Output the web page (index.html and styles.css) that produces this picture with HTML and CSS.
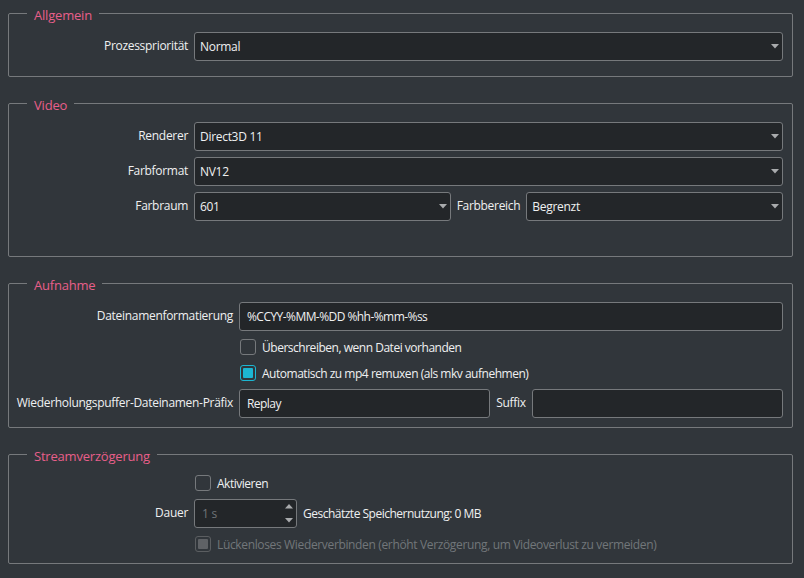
FILE: index.html
```html
<!DOCTYPE html>
<html lang="de">
<head>
<meta charset="utf-8">
<title>Erweitert</title>
<link rel="stylesheet" href="styles.css">
</head>
<body>
<div class="page">

  <fieldset class="group g-allgemein">
    <legend>Allgemein</legend>
    <div class="form">
      <label class="lbl">Prozesspriorität</label>
      <div class="combo"><span>Normal</span><svg class="arrow" width="8" height="5" viewBox="0 0 8 5"><polygon points="0,0 8,0 4,4.5"/></svg></div>
    </div>
  </fieldset>

  <fieldset class="group g-video">
    <legend>Video</legend>
    <div class="form">
      <label class="lbl">Renderer</label>
      <div class="combo"><span>Direct3D 11</span><svg class="arrow" width="8" height="5" viewBox="0 0 8 5"><polygon points="0,0 8,0 4,4.5"/></svg></div>
      <label class="lbl">Farbformat</label>
      <div class="combo"><span>NV12</span><svg class="arrow" width="8" height="5" viewBox="0 0 8 5"><polygon points="0,0 8,0 4,4.5"/></svg></div>
      <label class="lbl">Farbraum</label>
      <div class="pair">
        <div class="combo"><span>601</span><svg class="arrow" width="8" height="5" viewBox="0 0 8 5"><polygon points="0,0 8,0 4,4.5"/></svg></div>
        <label class="lbl">Farbbereich</label>
        <div class="combo"><span>Begrenzt</span><svg class="arrow" width="8" height="5" viewBox="0 0 8 5"><polygon points="0,0 8,0 4,4.5"/></svg></div>
      </div>
    </div>
  </fieldset>

  <fieldset class="group g-aufnahme">
    <legend>Aufnahme</legend>
    <div class="form wide">
      <label class="lbl">Dateinamenformatierung</label>
      <div class="edit">%CCYY-%MM-%DD %hh-%mm-%ss</div>
      <span></span>
      <div class="check"><span class="box"></span><span>Überschreiben, wenn Datei vorhanden</span></div>
      <span></span>
      <div class="check"><span class="box on"></span><span>Automatisch zu mp4 remuxen (als mkv aufnehmen)</span></div>
      <label class="lbl">Wiederholungspuffer-Dateinamen-Präfix</label>
      <div class="pair">
        <div class="edit">Replay</div>
        <label class="lbl">Suffix</label>
        <div class="edit"></div>
      </div>
    </div>
  </fieldset>

  <fieldset class="group g-stream">
    <legend>Streamverzögerung</legend>
    <div class="form">
      <span></span>
      <div class="check"><span class="box"></span><span>Aktivieren</span></div>
      <label class="lbl">Dauer</label>
      <div class="spinrow">
        <div class="spin disabled"><span>1 s</span>
          <span class="spin-btns">
            <svg width="8" height="5" viewBox="0 0 8 5"><polygon points="0,4.5 8,4.5 4,0"/></svg>
            <svg width="8" height="5" viewBox="0 0 8 5"><polygon points="0,0 8,0 4,4.5"/></svg>
          </span>
        </div>
        <span class="note">Geschätzte Speichernutzung: 0 MB</span>
      </div>
      <span></span>
      <div class="check disabled"><span class="box dis"></span><span>Lückenloses Wiederverbinden (erhöht Verzögerung, um Videoverlust zu vermeiden)</span></div>
    </div>
  </fieldset>

</div>
</body>
</html>
```

FILE: styles.css
```css
* { box-sizing: border-box; }

html, body {
  margin: 0;
  padding: 0;
  background: #31363b;
}

body {
  font-family: "Open Sans", "Noto Sans", "DejaVu Sans", sans-serif;
  font-size: 12px;
  letter-spacing: -0.3px;
  color: #eff0f1;
  width: 804px;
  height: 578px;
  overflow: hidden;
}

.page {
  display: flex;
  flex-direction: column;
  gap: 15px;
  padding: 2px 11px 0 8px;
}

.group {
  margin: 0;
  padding: 0;
  border: 1px solid #76797c;
  border-radius: 2px;
  min-width: 0;
}

.group legend {
  margin-left: 18px;
  padding: 4px 7px 0;
  height: 22px;
  line-height: 18px;
  font-size: 13px;
  letter-spacing: -0.2px;
  color: #e85f8a;
}

.form {
  display: grid;
  grid-template-columns: 179px 1fr;
  column-gap: 6px;
  row-gap: 6px;
  align-items: center;
  padding: 8px 9px 9px 0;
}

.form.wide {
  grid-template-columns: 224px 1fr;
}

.g-allgemein .form { padding-bottom: 15px; }
.g-video .form { padding-bottom: 35px; }

.lbl {
  text-align: right;
  white-space: nowrap;
  line-height: 16px;
  padding-bottom: 1px;
}

.combo, .edit, .spin {
  height: 29px;
  background: #232629;
  border: 1px solid #76797c;
  border-radius: 3px;
  display: flex;
  align-items: center;
  white-space: nowrap;
  min-width: 0;
}

.combo {
  padding: 0 3px 0 5px;
}

.combo span { flex: 1; }

.arrow {
  display: block;
  fill: #a9abad;
}

.edit {
  padding: 0 7px;
  letter-spacing: -0.55px;
}

.pair {
  display: flex;
  align-items: center;
  gap: 6px;
}

.pair > .combo, .pair > .edit {
  flex: 1;
}

.check {
  height: 20px;
  display: flex;
  align-items: center;
  gap: 6px;
  padding-left: 1px;
  white-space: nowrap;
  letter-spacing: -0.48px;
}

.box {
  width: 16px;
  height: 16px;
  border: 1px solid #76797c;
  border-radius: 3px;
  padding: 2px;
  flex: none;
}

.box.on {
  border-color: #1cb6d2;
}

.box.on::after, .box.dis::after {
  content: "";
  display: block;
  width: 100%;
  height: 100%;
  border-radius: 1px;
  background: #1cb6d2;
}

.box.dis {
  border-color: #5b5e61;
}

.box.dis::after {
  background: #5f6266;
}

.check.disabled {
  color: #72767a;
  letter-spacing: -0.35px;
}

.spinrow {
  display: flex;
  align-items: center;
  gap: 6px;
}

.spin {
  width: 103px;
  padding: 0 3px 0 7px;
  color: #6f7377;
}

.spin > span:first-child { flex: 1; }

.spin-btns {
  display: flex;
  flex-direction: column;
  justify-content: space-between;
  height: 19px;
  fill: #a9abad;
}

.spin-btns svg { display: block; }

.note {
  white-space: nowrap;
  letter-spacing: -0.5px;
}
```
